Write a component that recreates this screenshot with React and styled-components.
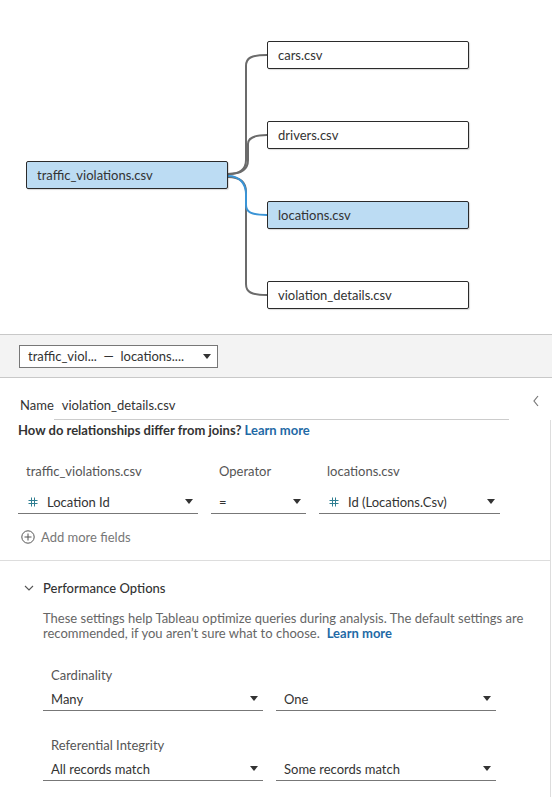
import React from 'react';
import styled, { createGlobalStyle } from 'styled-components';

const GlobalStyle = createGlobalStyle`
  html, body {
    margin: 0;
    padding: 0;
    background: #fff;
  }
  body {
    font-family: Lato, "Open Sans", "Liberation Sans", sans-serif;
    font-size: 13px;
    color: #333;
  }
`;

const tables = [
  { name: 'cars.csv', top: 41 },
  { name: 'drivers.csv', top: 121 },
  { name: 'locations.csv', top: 201, active: true },
  { name: 'violation_details.csv', top: 281 },
];

// connector paths from the root table to each related table
const links = [
  { d: 'M228,174 C240,174 246,170 246,160 L246,66 C246,58 251,55 267,55' },
  { d: 'M228,174 C240,174 248,170 248,160 L248,144 C248,138 253,135 267,135' },
  { d: 'M228,176 C240,176 246,184 246,194 L246,205 C246,212 251,215 267,215', active: true },
  { d: 'M228,177 C240,177 246,182 246,192 L246,284 C246,292 251,295 267,295' },
];

// numeric field type marker
const NumberIcon = () => (
  <HashIcon width="10" height="10" viewBox="0 0 10 10">
    <path d="M3.5,0.5 V9.5 M6.5,0.5 V9.5 M0.5,3.5 H9.5 M0.5,6.5 H9.5" stroke="#2f7e91" strokeWidth="1" fill="none" />
  </HashIcon>
);

export default function App() {
  return (
    <>
      <GlobalStyle />
      <Page>
        <Canvas>
          <Links width="552" height="334">
            {links.filter((l) => !l.active).map((l, i) => (
              <path key={i} d={l.d} fill="none" stroke="#6b6b6b" strokeWidth="2" />
            ))}
            {links.filter((l) => l.active).map((l, i) => (
              <path key={i} d={l.d} fill="none" stroke="#3a94d6" strokeWidth="2" />
            ))}
          </Links>
          <TableNode $active style={{ left: 26, top: 161 }}>
            traffic_violations.csv
          </TableNode>
          {tables.map((t) => (
            <TableNode key={t.name} $active={t.active} style={{ left: 267, top: t.top }}>
              {t.name}
            </TableNode>
          ))}
        </Canvas>

        <Toolbar>
          <PairSelect>
            <span>traffic_viol...&nbsp;&nbsp;—&nbsp;&nbsp;locations....</span>
            <Caret />
          </PairSelect>
        </Toolbar>

        <NameRow>
          <NameLabel>Name</NameLabel>
          <NameValue>violation_details.csv</NameValue>
          <Collapse>
            <svg width="8" height="12" viewBox="0 0 8 12">
              <path d="M6,1 L2,6 L6,11" fill="none" stroke="#777" strokeWidth="1.2" />
            </svg>
          </Collapse>
        </NameRow>

        <Body>
          <HelpLine>
            How do relationships differ from joins? <Link>Learn more</Link>
          </HelpLine>

          <FieldGrid>
            <FieldLabel>traffic_violations.csv</FieldLabel>
            <FieldLabel>Operator</FieldLabel>
            <FieldLabel>locations.csv</FieldLabel>
            <Select>
              <SelectText>
                <NumberIcon />
                Location Id
              </SelectText>
              <Caret />
            </Select>
            <Select>
              <SelectText>=</SelectText>
              <Caret />
            </Select>
            <Select>
              <SelectText>
                <NumberIcon />
                Id (Locations.Csv)
              </SelectText>
              <Caret />
            </Select>
          </FieldGrid>

          <AddFields>
            <svg width="14" height="14" viewBox="0 0 14 14">
              <circle cx="7" cy="7" r="6.2" fill="none" stroke="#555" strokeWidth="1" />
              <path d="M7,3.5 V10.5 M3.5,7 H10.5" stroke="#555" strokeWidth="1" />
            </svg>
            Add more fields
          </AddFields>

          <Section>
            <SectionHeader>
              <svg width="10" height="6" viewBox="0 0 10 6">
                <path d="M1,1 L5,5 L9,1" fill="none" stroke="#555" strokeWidth="1.1" />
              </svg>
              Performance Options
            </SectionHeader>
            <Description>
              <DescLine>
                These settings help Tableau optimize queries during analysis. The default settings are
              </DescLine>
              <DescLine>
                <span>recommended, if you aren’t sure what to choose.</span>
                <Link $gap>Learn more</Link>
              </DescLine>
            </Description>

            <OptionGroup>
              <OptionLabel>Cardinality</OptionLabel>
              <OptionRow>
                <Select>
                  <SelectText>Many</SelectText>
                  <Caret />
                </Select>
                <Select>
                  <SelectText>One</SelectText>
                  <Caret />
                </Select>
              </OptionRow>
            </OptionGroup>

            <OptionGroup>
              <OptionLabel>Referential Integrity</OptionLabel>
              <OptionRow>
                <Select>
                  <SelectText>All records match</SelectText>
                  <Caret />
                </Select>
                <Select>
                  <SelectText>Some records match</SelectText>
                  <Caret />
                </Select>
              </OptionRow>
            </OptionGroup>
          </Section>
        </Body>
      </Page>
    </>
  );
}

const Page = styled.div`
  width: 552px;
  height: 797px;
  overflow: hidden;
  background: #fff;
`;

const Canvas = styled.div`
  position: relative;
  height: 334px;
`;

const Links = styled.svg`
  position: absolute;
  left: 0;
  top: 0;
`;

const TableNode = styled.div`
  position: absolute;
  box-sizing: border-box;
  width: 202px;
  height: 28px;
  padding-left: 10px;
  display: flex;
  align-items: center;
  background: ${(p) => (p.$active ? '#bcdcf3' : '#fff')};
  border: 1px solid #2b2b2b;
  border-radius: 2px;
  box-shadow: 1px 1px 1px rgba(0, 0, 0, 0.15);
  color: #333;
  font-size: 13px;
`;

const Toolbar = styled.div`
  height: 42px;
  background: #f3f3f3;
  border-top: 1px solid #c8c8c8;
  border-bottom: 1px solid #c8c8c8;
  display: flex;
  align-items: center;
  padding-left: 19px;
`;

const PairSelect = styled.div`
  box-sizing: border-box;
  width: 199px;
  height: 23px;
  background: #fff;
  border: 1px solid #777;
  display: flex;
  align-items: center;
  justify-content: space-between;
  padding: 0 6px 0 8px;
  color: #333;
`;

const Caret = styled.span`
  width: 0;
  height: 0;
  border-left: 4px solid transparent;
  border-right: 4px solid transparent;
  border-top: 5px solid #333;
  flex-shrink: 0;
`;

const NameRow = styled.div`
  position: relative;
  height: 42px;
  display: flex;
  align-items: flex-end;
  padding: 0 0 0 20px;
  box-sizing: border-box;
`;

const NameLabel = styled.span`
  color: #333;
  margin-right: 8px;
  padding-bottom: 5px;
  line-height: 20px;
`;

const NameValue = styled.div`
  box-sizing: border-box;
  width: 455px;
  margin-left: -8px;
  padding: 0 0 4px 8px;
  line-height: 20px;
  border-bottom: 1px solid #ccc;
`;

const Collapse = styled.span`
  position: absolute;
  right: 12px;
  top: 16px;
`;

const Body = styled.div`
  width: 550px;
  border-right: 1px solid #ddd;
  min-height: 380px;
`;

const HelpLine = styled.div`
  padding-left: 18px;
  height: 20px;
  line-height: 20px;
  font-weight: 700;
  color: #333;
`;

const Link = styled.span`
  color: #1f6aa6;
  font-weight: 700;
  margin-left: ${(p) => (p.$gap ? '7px' : '0')};
`;

const FieldGrid = styled.div`
  display: grid;
  grid-template-columns: 180px 95px 181px;
  column-gap: 13px;
  padding: 21px 0 0 18px;
`;

const FieldLabel = styled.div`
  padding-left: 8px;
  height: 20px;
  line-height: 20px;
  color: #555;
  margin-bottom: 9px;
`;

const Select = styled.div`
  box-sizing: border-box;
  height: 24px;
  display: flex;
  align-items: center;
  justify-content: space-between;
  padding: 0 5px 0 8px;
  border-bottom: 1px solid #777;
  color: #333;
`;

const SelectText = styled.span`
  display: flex;
  align-items: center;
`;

const HashIcon = styled.svg`
  margin: 0 9px 0 2px;
`;

const AddFields = styled.div`
  display: flex;
  align-items: center;
  gap: 6px;
  padding-left: 21px;
  margin-top: 13px;
  height: 20px;
  color: #777;
`;

const Section = styled.div`
  border-top: 1px solid #ddd;
  margin-top: 13px;
  padding-top: 17px;
`;

const SectionHeader = styled.div`
  display: flex;
  align-items: center;
  gap: 9px;
  padding-left: 24px;
  height: 20px;
  font-weight: 500;
  color: #333;
`;

const Description = styled.div`
  margin: 13px 0 0 43px;
  color: #666;
`;

const DescLine = styled.div`
  display: flex;
  line-height: 15px;
  white-space: nowrap;
`;

const OptionGroup = styled.div`
  margin-top: 24px;
  padding-left: 43px;
  & + & {
    margin-top: 24px;
  }
`;

const OptionLabel = styled.div`
  padding-left: 8px;
  height: 20px;
  line-height: 20px;
  color: #555;
  margin-bottom: 2px;
`;

const OptionRow = styled.div`
  display: grid;
  grid-template-columns: 220px 220px;
  column-gap: 13px;
`;
